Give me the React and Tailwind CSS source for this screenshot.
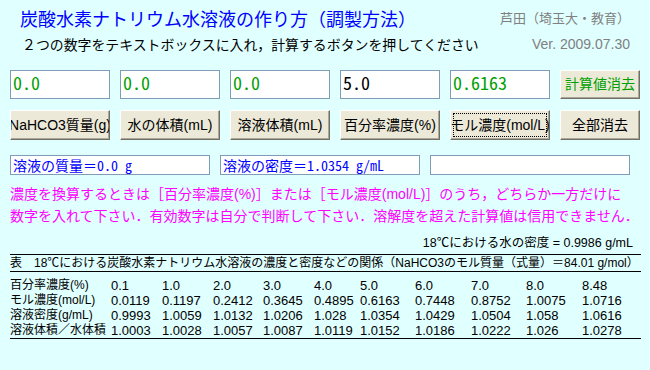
import React from "react";

const JP = "font-['Noto_Sans_CJK_JP',sans-serif]";
const MIX = "font-['Liberation_Sans','Noto_Sans_CJK_JP',sans-serif]";
const MONO = "font-['Noto_Sans_Mono_CJK_JP','Liberation_Mono','Noto_Sans_CJK_JP',monospace]";

function Field({ value, green }) {
  return (
    <div
      className={`w-[100px] h-[29px] bg-white border border-[#7f9db9] pl-[2px] pt-[1px] text-[18px] leading-[20px] ${MONO} ${
        green ? "text-[#00a000]" : "text-black"
      }`}
    >
      {value}
    </div>
  );
}

function Btn({ children, green, h = "h-[30px]" }) {
  return (
    <div
      className={`relative w-[80px] ${h} bg-[#ece9d8] border border-t-white border-l-white border-r-[#716f64] border-b-[#716f64] shadow-[inset_-1px_-1px_0_#aca899] flex items-center justify-center overflow-hidden whitespace-nowrap text-[14px] ${MIX} ${
        green ? "text-[#00a000]" : "text-black"
      }`}
    >
      {children}
    </div>
  );
}

function WideBtn({ children, focused }) {
  return (
    <div
      className={`relative w-[100px] h-[30px] bg-[#ece9d8] border border-t-white border-l-white border-r-[#716f64] border-b-[#716f64] shadow-[inset_-1px_-1px_0_#aca899] flex items-center justify-center overflow-hidden whitespace-nowrap text-[14px] ${MIX} text-black`}
    >
      {children}
      {focused && (
        <span className="absolute inset-[2px] border border-dotted border-black" />
      )}
    </div>
  );
}

function Info({ children }) {
  return (
    <div
      className={`w-[200px] h-[20px] bg-white border border-[#7f9db9] pl-[2px] text-[14px] leading-[18px] text-[#0000ff] whitespace-nowrap overflow-hidden ${MONO}`}
    >
      {children}
    </div>
  );
}

const rows = [
  ["百分率濃度(%)", "0.1", "1.0", "2.0", "3.0", "4.0", "5.0", "6.0", "7.0", "8.0", "8.48"],
  ["モル濃度(mol/L)", "0.0119", "0.1197", "0.2412", "0.3645", "0.4895", "0.6163", "0.7448", "0.8752", "1.0075", "1.0716"],
  ["溶液密度(g/mL)", "0.9993", "1.0059", "1.0132", "1.0206", "1.028", "1.0354", "1.0429", "1.0504", "1.058", "1.0616"],
  ["溶液体積／水体積", "1.0003", "1.0028", "1.0057", "1.0087", "1.0119", "1.0152", "1.0186", "1.0222", "1.026", "1.0278"],
];

export default function App() {
  return (
    <div className={`w-[650px] h-[370px] bg-[#e0ffff] overflow-hidden ${JP}`}>
      {/* header row 1 */}
      <div className="mt-[5px] h-[26px] flex items-center justify-between pl-[20px] pr-[20px]">
        <div className="text-[18px] leading-[26px] text-[#0000ff] whitespace-nowrap">
          炭酸水素ナトリウム水溶液の作り方（調製方法）
        </div>
        <div className="text-[13px] leading-[26px] text-[#808080] whitespace-nowrap">
          芦田（埼玉大・教育）
        </div>
      </div>
      {/* header row 2 */}
      <div className="mt-[3px] h-[20px] flex items-center justify-between pl-[22px] pr-[20px]">
        <div className="text-[13.9px] leading-[20px] text-black whitespace-nowrap">
          ２つの数字をテキストボックスに入れ，計算するボタンを押してください
        </div>
        <div className={`text-[14px] leading-[20px] text-[#808080] ${MIX}`}>Ver. 2009.07.30</div>
      </div>

      {/* inputs */}
      <div className="mt-[16px] pl-[10px] flex gap-[10px]">
        <Field value="0.0" green />
        <Field value="0.0" green />
        <Field value="0.0" green />
        <Field value="5.0" />
        <Field value="0.6163" green />
        <Btn green h="h-[29px]">計算値消去</Btn>
      </div>

      {/* buttons */}
      <div className="mt-[11px] pl-[10px] flex gap-[10px]">
        <WideBtn>NaHCO3質量(g)</WideBtn>
        <WideBtn>水の体積(mL)</WideBtn>
        <WideBtn>溶液体積(mL)</WideBtn>
        <WideBtn>百分率濃度(%)</WideBtn>
        <WideBtn focused>モル濃度(mol/L)</WideBtn>
        <Btn>全部消去</Btn>
      </div>

      {/* info */}
      <div className="mt-[15px] pl-[10px] flex gap-[10px]">
        <Info>溶液の質量＝0.0 g</Info>
        <Info>溶液の密度＝1.0354 g/mL</Info>
        <Info />
      </div>

      {/* pink notes */}
      <div className={`mt-[8px] pl-[10px] text-[14px] leading-[22px] text-[#ff00ff] whitespace-nowrap ${MIX}`}>
        <div>濃度を換算するときは［百分率濃度(%)］または［モル濃度(mol/L)］のうち，どちらか一方だけに</div>
        <div>数字を入れて下さい．有効数字は自分で判断して下さい．溶解度を超えた計算値は信用できません．</div>
      </div>

      {/* water density */}
      <div className={`mt-[8px] pr-[17px] text-right text-[12.5px] leading-[16px] text-black ${MIX}`}>
        18℃における水の密度 = 0.9986 g/mL
      </div>

      {/* table */}
      <div className={`mt-[3px] ml-[10px] w-[631px] text-[12px] text-black ${MIX}`}>
        <div className="border-t border-black h-[17px] leading-[16px] whitespace-nowrap">
          表　18℃における炭酸水素ナトリウム水溶液の濃度と密度などの関係（NaHCO3のモル質量（式量）＝84.01 g/mol）
        </div>
        <div className="border-t border-b border-black pt-[6px]">
          {rows.map((r, i) => (
            <div
              key={i}
              className="grid grid-cols-[101px_51px_51px_50px_51px_46px_55px_56px_55px_56px_58px] h-[15px] leading-[15px] whitespace-nowrap"
            >
              {r.map((c, j) => (
                <div key={j} className={j === 0 ? "text-[12px]" : "text-[13px]"}>
                  {c}
                </div>
              ))}
            </div>
          ))}
        </div>
      </div>
    </div>
  );
}
